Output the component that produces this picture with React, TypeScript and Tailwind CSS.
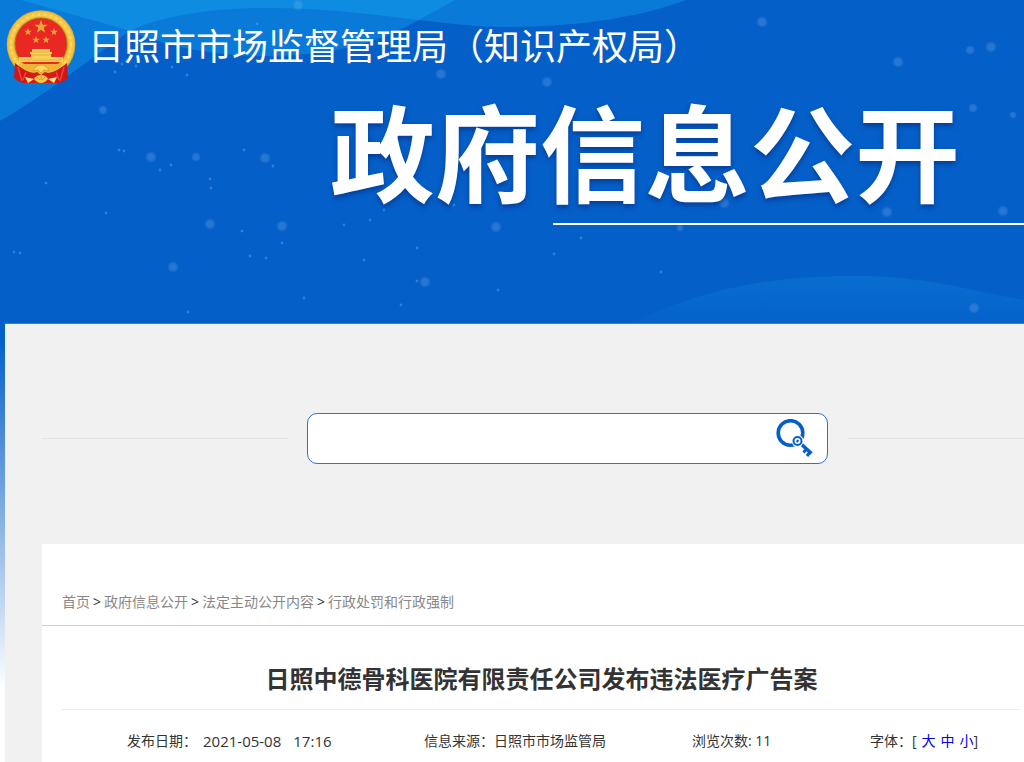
import React, { useState } from 'react';

interface Dot {
  x: number;
  y: number;
  r: number;
}

const DOTS: Dot[] = [
  { x: 298, y: 5, r: 5 },
  { x: 103, y: 110, r: 4 },
  { x: 151, y: 157, r: 5 },
  { x: 196, y: 157, r: 4 },
  { x: 265, y: 158, r: 5 },
  { x: 210, y: 224, r: 5 },
  { x: 282, y: 226, r: 5 },
  { x: 173, y: 267, r: 5 },
  { x: 441, y: 74, r: 5 },
  { x: 386, y: 200, r: 4 },
  { x: 496, y: 227, r: 5 },
  { x: 425, y: 282, r: 5 },
  { x: 547, y: 82, r: 5 },
  { x: 762, y: 22, r: 5 },
  { x: 898, y: 62, r: 5 },
  { x: 970, y: 50, r: 4 },
  { x: 991, y: 47, r: 5 },
  { x: 973, y: 108, r: 4 },
  { x: 1013, y: 115, r: 3 },
  { x: 724, y: 203, r: 5 },
  { x: 887, y: 212, r: 5 },
  { x: 1003, y: 211, r: 5 },
  { x: 680, y: 228, r: 3 },
  { x: 974, y: 308, r: 5 },
];

const SPECKS: [number, number][] = [
  [119, 150], [124, 151], [160, 170], [171, 165], [273, 166], [244, 150], [210, 179], [211, 188],
  [46, 183], [106, 213], [14, 252], [20, 253], [242, 231], [282, 243], [250, 256], [266, 258],
  [344, 225], [370, 220], [384, 210], [417, 248], [364, 260], [417, 281], [498, 290], [401, 305],
  [304, 298], [188, 312], [115, 72], [122, 64], [136, 66], [172, 67], [187, 75], [257, 24],
  [581, 238], [554, 254], [661, 272], [454, 205],
];

const STARS = [
  { x: 35, y: 17, s: 7 },
  { x: 22, y: 22, s: 4 },
  { x: 48, y: 22, s: 4 },
  { x: 30, y: 30, s: 4 },
  { x: 40, y: 30, s: 4 },
];

const CRUMBS = ['首页', '政府信息公开', '法定主动公开内容', '行政处罚和行政强制'];

const HeaderArt: React.FC = () => (
  <svg
    className="absolute inset-0 h-full w-full"
    viewBox="0 0 1024 323"
    preserveAspectRatio="xMinYMin slice"
    aria-hidden="true"
  >
    <defs>
      <linearGradient id="hill" x1="0" y1="0" x2="0" y2="1">
        <stop offset="0" stopColor="#086dcf" />
        <stop offset="1" stopColor="#0562ca" />
      </linearGradient>
      <radialGradient id="dot">
        <stop offset="0.5" stopColor="#7fb2ea" stopOpacity="0.28" />
        <stop offset="1" stopColor="#7fb2ea" stopOpacity="0" />
      </radialGradient>
    </defs>
    <path
      d="M0 0H686C640 17 580 27 505 27C440 27 365 8 268 8C210 8 165 16 134 29C105 46 60 86 0 121Z"
      fill="#14aff5"
      fillOpacity="0.35"
    />
    <path d="M21 0L127 30C170 49 225 57 275 56C335 54 375 44 415 22L455 0Z" fill="#14aff5" fillOpacity="0.35" />
    <path d="M632 323C700 290 770 275 860 276C930 277 965 290 1024 300V323Z" fill="url(#hill)" />
    {DOTS.map((d) => (
      <circle key={`${d.x}-${d.y}`} cx={d.x} cy={d.y} r={d.r + 1} fill="url(#dot)" />
    ))}
    {SPECKS.map(([x, y]) => (
      <circle key={`${x}-${y}`} cx={x} cy={y} r="1.4" fill="#6fa6e6" fillOpacity="0.45" />
    ))}
  </svg>
);

const Emblem: React.FC = () => (
  <svg className="h-[74px] w-[70px] shrink-0" viewBox="0 0 70 74" role="img" aria-label="国徽">
    <defs>
      <radialGradient id="gold">
        <stop offset="0.74" stopColor="#d9981f" />
        <stop offset="0.84" stopColor="#f8cd48" />
        <stop offset="0.94" stopColor="#f5c545" />
        <stop offset="1" stopColor="#dfa42c" />
      </radialGradient>
    </defs>
    <circle cx="35" cy="34.5" r="34.3" fill="url(#gold)" />
    <circle cx="35" cy="34.5" r="30" fill="none" stroke="#fbdc6e" strokeWidth="2" strokeDasharray="2 4" />
    <circle cx="35" cy="34" r="26" fill="#e92823" stroke="#a9751c" strokeWidth="0.8" />
    {STARS.map((s) => (
      <path
        key={`${s.x}-${s.y}`}
        transform={`translate(${s.x} ${s.y}) scale(${s.s})`}
        d="M0-1L.24-.32L.95-.31L.38.12L.59.81L0 .4L-.59.81L-.38.12L-.95-.31L-.24-.32Z"
        fill="#e9a83a"
      />
    ))}
    <path d="M26 39H44V42H46V44H45V47H57V52H13V47H25V44H24V42H26Z" fill="#f8cf57" />
    <path d="M26 42H44M25 45H45M14 50H56" stroke="#e3a637" strokeWidth="0.8" />
    <path d="M9 53Q17 60 26 62L30 73H17Q12 72 8 68Z" fill="#cf1717" />
    <path d="M61 53Q53 60 44 62L40 73H53Q58 72 62 68Z" fill="#cf1717" />
    <path d="M22 62H48L51 73H19Z" fill="#d41b18" />
    <path d="M12 57L16 71M58 57L54 71M20 62L17 70M50 62L53 70" stroke="#f0443a" strokeWidth="1.5" />
    <path d="M13 54H57Q52 62 42 63L39 62L35 65L31 62L28 63Q18 62 13 54Z" fill="#efb536" />
    <path d="M27 61Q29 55 35 55Q41 55 43 61L38 60L35 63L32 60Z" fill="#fbd75e" stroke="#c98a1a" strokeWidth="0.6" />
    <path d="M28 69Q30 65 35 65Q40 65 42 69Q39 73 35 73Q31 73 28 69Z" fill="#f5c744" />
    <path d="M31 67L34 70M35 66V70M39 67L36 70" stroke="#c98a1a" strokeWidth="0.7" />
    <path d="M19 67L28 69L22 73ZM51 67L42 69L48 73Z" fill="#f9e08a" />
  </svg>
);

const KeySearchIcon: React.FC = () => (
  <svg className="h-10 w-10" viewBox="0 0 40 40" fill="none" aria-hidden="true">
    <circle cx="15.5" cy="14" r="12.3" stroke="#055fc8" strokeWidth="3.6" />
    <path d="M25 24L36.5 34.5" stroke="#055fc8" strokeWidth="3.6" />
    <path d="M31 30.500L28.500 33.500M35 33L32 37" stroke="#055fc8" strokeWidth="3" />
    <circle cx="22.5" cy="22" r="6" fill="#fff" />
    <circle cx="22.5" cy="22" r="4" stroke="#055fc8" strokeWidth="2" />
    <path d="M21.500 23L23.500 21" stroke="#055fc8" strokeWidth="2" />
  </svg>
);

const SearchBar: React.FC = () => {
  const [keyword, setKeyword] = useState('');

  return (
    <div className="flex items-center pl-[37px]">
      <div className="h-px w-1/4 bg-[#e1e1e1]" />
      <form
        className="mr-5 ml-[19px] flex h-[51px] w-[521px] shrink-0 items-center rounded-[10px] border border-[#2a74cf] bg-white pr-3"
        onSubmit={(e) => e.preventDefault()}
      >
        <input
          type="text"
          aria-label="搜索"
          value={keyword}
          onChange={(e) => setKeyword(e.target.value)}
          className="h-full min-w-0 flex-1 rounded-[10px] px-4 text-sm focus:outline-none"
        />
        <button type="submit" aria-label="搜索" className="cursor-pointer">
          <KeySearchIcon />
        </button>
      </form>
      <div className="h-px flex-1 bg-[#e1e1e1]" />
    </div>
  );
};

const App: React.FC = () => {
  return (
    <div className="flex min-h-screen flex-col overflow-x-hidden bg-[linear-gradient(to_bottom,#055fc8_340px,#ffffff_690px)] font-['Open_Sans','Noto_Sans_CJK_SC',sans-serif] text-sm text-[#333333]">
      <header className="relative h-[323px] text-white">
        <HeaderArt />
        <div className="relative flex flex-col">
          <div className="flex items-center gap-3 pt-[10px] pl-[6px]">
            <Emblem />
            <p className="text-4xl whitespace-nowrap">日照市市场监督管理局（知识产权局）</p>
          </div>
          <h1 className="mt-4 pr-[64px] text-right text-[105px] leading-[108px] font-bold whitespace-nowrap [text-shadow:0_3px_5px_rgba(0,40,120,0.6)]">
            政府信息公开
          </h1>
          <div className="mt-[15px] ml-auto h-[2px] w-[46%] bg-white" />
        </div>
      </header>

      <main className="ml-[5px] flex flex-1 flex-col border-t border-[#3b80d3] bg-[#f1f1f1] pt-[89px]">
        <SearchBar />

        <article className="mt-20 ml-[37px] flex-1 bg-white">
          {/* Breadcrumb */}
          <nav className="flex h-[82px] items-end gap-[3px] border-b border-[#cfcfcf] pb-[13px] pl-5 leading-5">
            {CRUMBS.map((crumb, i) => (
              <React.Fragment key={crumb}>
                {i > 0 && <span>&gt;</span>}
                <a href="#" className="text-[#888888]">
                  {crumb}
                </a>
              </React.Fragment>
            ))}
          </nav>

          <div className="pr-[3px] pl-5">
            <h2 className="border-b border-[#ededed] pt-[35px] pb-3 text-center text-[24px] leading-9 font-bold">
              日照中德骨科医院有限责任公司发布违法医疗广告案
            </h2>

            {/* Article info */}
            <div className="grid grid-cols-[297fr_268fr_178fr_151fr] pt-[19px] pl-[65px] leading-6 whitespace-nowrap">
              <div className="flex">
                <span>发布日期：</span>
                <time className="ml-[6px] flex gap-3 text-[15px]">
                  <span>2021-05-08</span>
                  <span>17:16</span>
                </time>
              </div>
              <span>信息来源：日照市市场监管局</span>
              <span>浏览次数: 11</span>
              <div className="flex gap-[5px]">
                <span>字体：[</span>
                <button type="button" className="text-[#0000ee]">大</button>
                <button type="button" className="text-[#0000ee]">中</button>
                <span>
                  <button type="button" className="text-[#0000ee]">小</button>]
                </span>
              </div>
            </div>
          </div>
        </article>
      </main>
    </div>
  );
};

export default App;
